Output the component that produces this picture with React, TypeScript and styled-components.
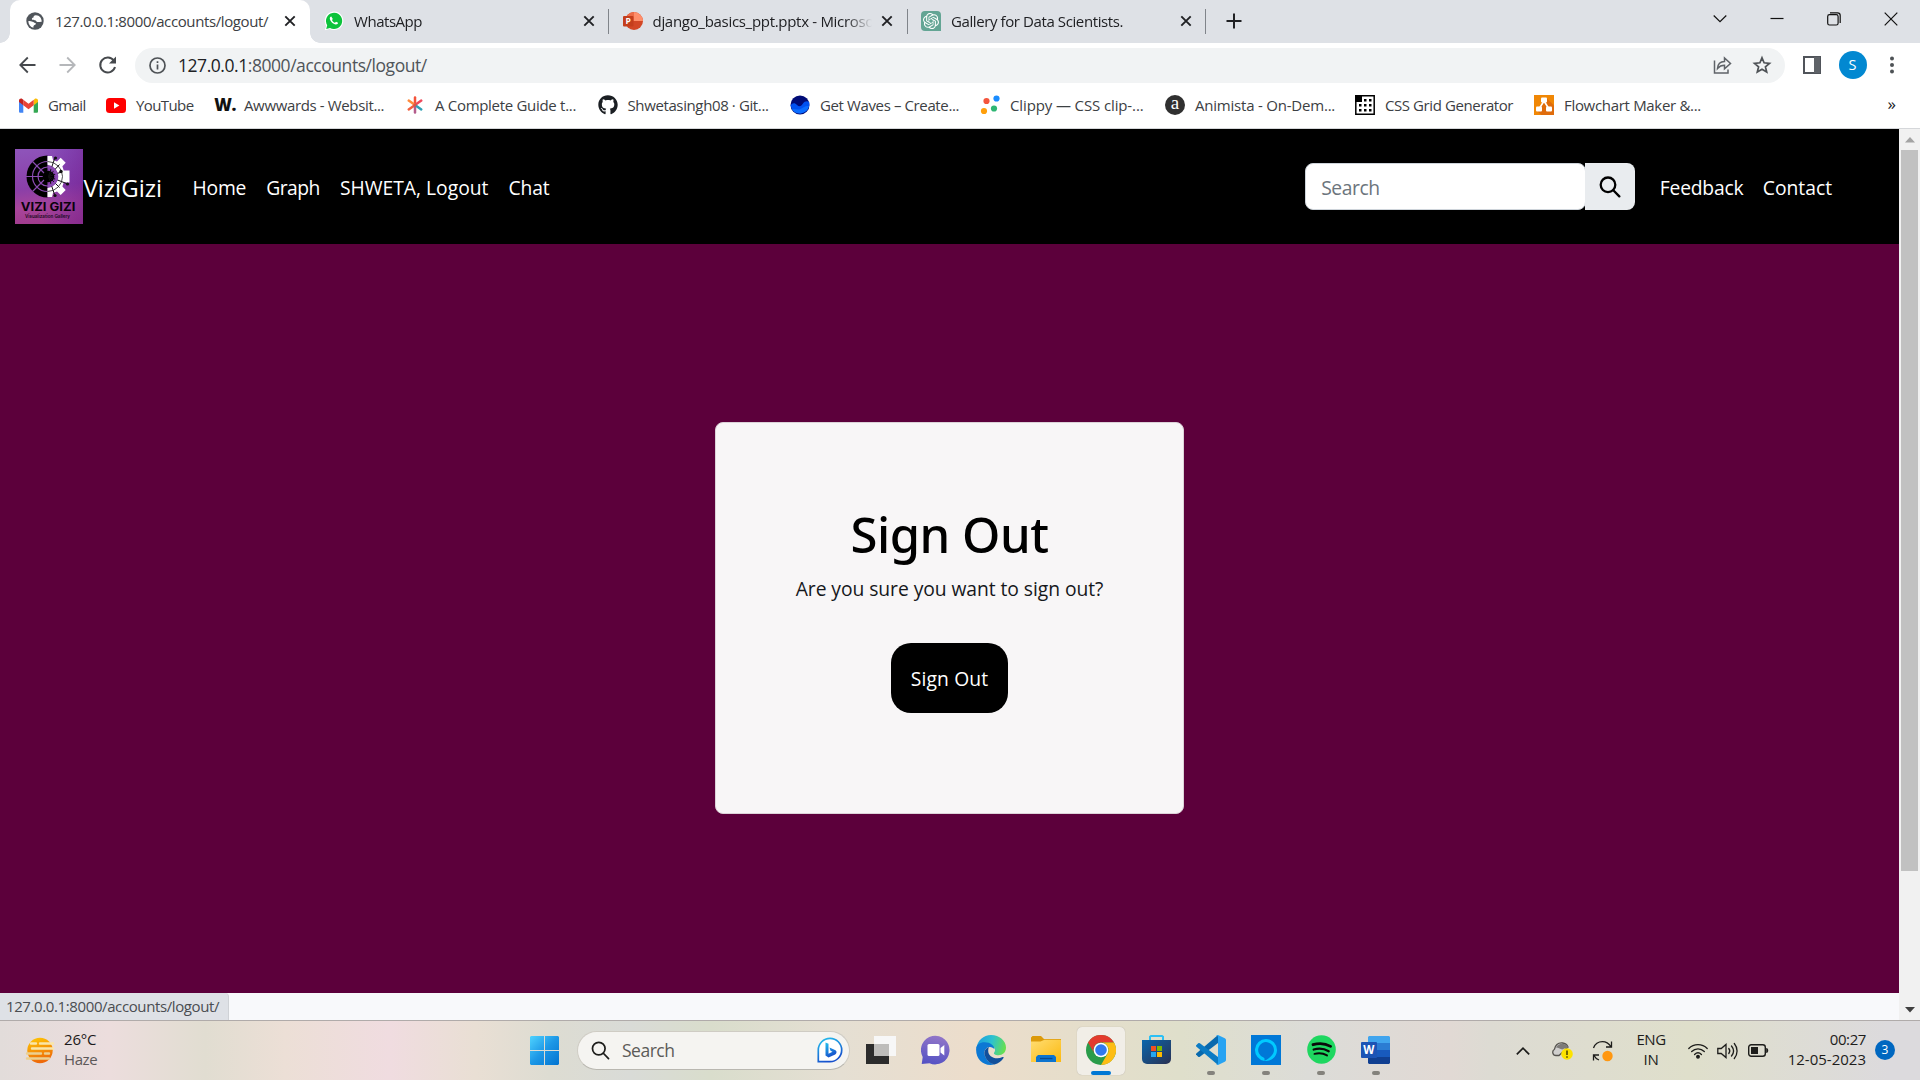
import React from "react";
import styled, { createGlobalStyle } from "styled-components";
import { FaGithub } from "react-icons/fa";
import { SiOpenai } from "react-icons/si";

const sans = `"Open Sans", "Noto Sans", sans-serif`;

const GlobalStyle = createGlobalStyle`
  *, *::before, *::after { box-sizing: border-box; }
  body { margin: 0; overflow: hidden; background: #fff; font-family: ${sans}; }
  svg { display: block; flex: none; }
  button { font-family: inherit; border: 0; padding: 0; background: none; }
`;

const Screen = styled.div`
  width: 1920px;
  height: 1080px;
  display: flex;
  flex-direction: column;
  overflow: hidden;
`;

const Label = styled.span<{ $size?: number; $track?: number; $color?: string }>`
  font-size: ${(p) => p.$size ?? 15}px;
  letter-spacing: ${(p) => p.$track ?? -0.37}px;
  color: ${(p) => p.$color ?? "#3c4043"};
  line-height: 20px;
  white-space: nowrap;
`;

/* ---------- Tab strip ---------- */

const TabStrip = styled.div`
  height: 43px;
  flex: none;
  display: flex;
  padding-left: 10px;
  background: #dee1e6;
`;

const Tab = styled.div<{ $active?: boolean }>`
  position: relative;
  width: ${(p) => (p.$active ? 300 : 298.5)}px;
  display: flex;
  align-items: center;
  padding: 0 14px 1px ${(p) => (p.$active ? 16 : 15)}px;
  background: ${(p) => (p.$active ? "#fff" : "transparent")};
  border-radius: 10px 10px 0 0;

  &::before,
  &::after {
    content: ${(p) => (p.$active ? '""' : "none")};
    position: absolute;
    bottom: 0;
    width: 10px;
    height: 10px;
  }
  &::before {
    left: -10px;
    background: radial-gradient(circle at 0 0, transparent 9.5px, #fff 10px);
  }
  &::after {
    right: -10px;
    background: radial-gradient(circle at 100% 0, transparent 9.5px, #fff 10px);
  }
`;

const TabIcon = styled.span`
  width: 18px;
  display: flex;
  justify-content: center;
`;

const TabTitle = styled(Label)<{ $fade?: boolean }>`
  flex: 1;
  min-width: 0;
  margin: 0 ${(p) => (p.$fade ? 9 : 4)}px 0 ${(p) => (p.$fade ? 11 : 11)}px;
  padding-bottom: 1px;
  overflow: hidden;
  ${(p) => p.$fade && "mask-image: linear-gradient(90deg, #000 88%, transparent 100%);"}
`;

const TabDivider = styled.div`
  width: 1px;
  height: 25px;
  margin: 9px -0.5px 0 -0.5px;
  background: #80848a;
`;

const NewTab = styled.span`
  display: flex;
  align-items: center;
  margin-left: 20px;
  padding-bottom: 1px;
`;

const WindowControls = styled.div`
  display: flex;
  align-items: flex-start;
  gap: 43px;
  margin-left: auto;
  padding: 12px 22px 0 0;
`;

/* ---------- Toolbar ---------- */

const Toolbar = styled.div`
  height: 44px;
  flex: none;
  display: flex;
  align-items: center;
  padding: 0 20px 0 18px;
  background: #fff;
`;

const NavButtons = styled.div`
  width: 117px;
  display: flex;
  gap: 20px;
`;

const Omnibox = styled.div`
  width: 1650px;
  height: 35px;
  display: flex;
  align-items: center;
  padding: 0 13px 0 14px;
  border-radius: 18px;
  background: #f1f3f4;
`;

const Url = styled(Label)`
  margin-left: 12px;
  b {
    font-weight: 400;
    color: #202124;
  }
`;

const OmniActions = styled.div`
  display: flex;
  gap: 20px;
  margin-left: auto;
`;

const ToolbarEnd = styled.div`
  flex: 1;
  display: flex;
  align-items: center;
  justify-content: space-between;
  padding-left: 18px;
`;

const Avatar = styled.span`
  width: 28px;
  height: 28px;
  border-radius: 50%;
  background: #0288d1;
  color: #fff;
  font-size: 14.5px;
  line-height: 28px;
  text-align: center;
`;

/* ---------- Bookmarks ---------- */

const BookmarkBar = styled.div`
  height: 42px;
  flex: none;
  display: flex;
  align-items: center;
  padding: 0 24px 5px 18px;
  background: #fff;
  border-bottom: 1px solid #d5d7da;
`;

const Bookmark = styled.div<{ $width: number }>`
  width: ${(p) => p.$width}px;
  display: flex;
  align-items: center;
  gap: 10px;
`;

const BookmarkIcon = styled.span`
  width: 20px;
  height: 20px;
  display: flex;
  align-items: center;
  justify-content: center;
`;

const WMark = styled.span`
  padding-left: 2px;
  color: #111;
  font: 800 17px/20px ${sans};
  letter-spacing: -0.5px;
`;

const AnimistaMark = styled.span`
  width: 20px;
  height: 20px;
  border-radius: 50%;
  background: #303030;
  color: #fff;
  font: 19px/16px "Liberation Serif", serif;
  text-align: center;
`;

const Overflow = styled(Label)`
  margin-left: auto;
  padding-bottom: 2px;
`;

/* ---------- Web page ---------- */

const Viewport = styled.div`
  height: 891px;
  flex: none;
  display: flex;
`;

const Page = styled.div`
  width: 1899px;
  display: flex;
  flex-direction: column;
  background: #f8f9fb;
`;

const Navbar = styled.nav`
  height: 115px;
  display: flex;
  align-items: center;
  padding: 0 67px 0 15px;
  background: #000;
`;

const NavLink = styled(Label)<{ $gap?: number }>`
  margin: 2px 0 0 ${(p) => p.$gap ?? 20}px;
`;

const SearchGroup = styled.div`
  display: flex;
  height: 47px;
  margin-left: auto;
`;

const SearchBox = styled.div`
  width: 281px;
  padding: 14px 0 0 15px;
  background: #fff;
  border: 1px solid #ced4da;
  border-radius: 8px;
  line-height: 0;
`;

const SearchButton = styled.button`
  width: 50px;
  margin-left: -1px;
  display: flex;
  align-items: center;
  justify-content: center;
  background: #e9ecef;
  border-radius: 0 8px 8px 0;
`;

const Main = styled.main`
  height: 749px;
  display: flex;
  justify-content: center;
  align-items: flex-start;
  padding-top: 178px;
  background: #5c003b;
`;

const Card = styled.section`
  width: 469px;
  height: 392px;
  display: flex;
  flex-direction: column;
  align-items: center;
  padding-top: 81px;
  background: #f8f6f7;
  border: 1px solid #dcd2d8;
  border-radius: 8px;
`;

const CardTitle = styled.h1`
  margin: 0;
  font: 500 49px/60px "Noto Sans", sans-serif;
  letter-spacing: -0.5px;
  color: #000;
`;

const CardText = styled(Label)`
  margin-top: 15px;
`;

const CardButton = styled.button`
  width: 117px;
  height: 70px;
  margin-top: 44px;
  padding-top: 2px;
  border-radius: 20px;
  background: #000;
`;

const PageFooter = styled.div`
  flex: 1;
  display: flex;
`;

const StatusBubble = styled.div`
  width: 229px;
  height: 27px;
  padding: 3px 0 0 6px;
  line-height: 0;
  background: #dee1e6;
  border-right: 1px solid #cfd2d6;
  border-top-right-radius: 4px;
`;

const Scrollbar = styled.div`
  width: 21px;
  display: flex;
  flex-direction: column;
  align-items: center;
  background: #f1f1f1;
`;

const ScrollButton = styled.span`
  height: 21px;
  display: flex;
  align-items: center;
`;

const ScrollThumb = styled.div`
  width: 17px;
  height: 721px;
  margin-bottom: auto;
  background: #c1c1c1;
`;

/* ---------- Taskbar ---------- */

const Taskbar = styled.div`
  height: 60px;
  flex: none;
  display: flex;
  align-items: center;
  border-top: 1px solid #b0abaa;
  background: linear-gradient(
    90deg, #e2dcda 0, #ecdddd 110px, #e1ddd1 205px, #ecdfd6 285px, #f0dce0 390px,
    #e9dfd4 475px, #dddcd2 550px, #d9dbd7 630px, #d9ddcc 710px, #e5dfd3 840px,
    #ecddcb 975px, #dfdfcb 1180px, #dcdcd8 1310px, #e1d9d4 1450px, #dddbd3 1490px,
    #dfdfcb 1690px, #dcdadd 1890px
  );
`;

const Weather = styled.div`
  width: 530px;
  display: flex;
  align-items: center;
  gap: 9px;
  padding-left: 25px;
`;

const Stack = styled.div<{ $align?: string }>`
  display: flex;
  flex-direction: column;
  align-items: ${(p) => p.$align ?? "flex-start"};
  padding-bottom: 3px;
`;

const TaskSearch = styled.div`
  width: 273px;
  height: 39px;
  display: flex;
  align-items: center;
  gap: 12px;
  margin-left: 18px;
  padding: 0 6px 1px 13px;
  border: 1px solid #cfccc4;
  border-bottom-color: #b9b7b0;
  border-radius: 20px;
  background: #f5f4f1;
  & > svg:last-child { margin-left: auto; }
`;

const AppTile = styled.div<{ $active: boolean }>`
  width: 48px;
  height: 48px;
  margin-left: 7px;
  display: flex;
  flex-direction: column;
  align-items: center;
  justify-content: space-between;
  padding-top: 8px;
  border-radius: 5px;
  background: ${(p) => (p.$active ? "#f1eee7" : "transparent")};
  box-shadow: ${(p) => (p.$active ? "0 0 1px #a8a49a" : "none")};
`;

const AppIcon = styled.span`
  height: 30px;
  display: flex;
  align-items: center;
`;

const Indicator = styled.span<{ $kind?: "active" | "open" }>`
  width: ${(p) => (p.$kind === "active" ? 20 : 8)}px;
  height: 4px;
  border-radius: 2px;
  background: ${(p) => (p.$kind === "active" ? "#0078d4" : p.$kind ? "#84827c" : "transparent")};
`;

const Tray = styled.div`
  flex: 1;
  display: flex;
  align-items: center;
  justify-content: flex-end;
  padding-right: 25px;
`;

const TrayIcon = styled.span<{ $gap: number }>`
  margin-right: ${(p) => p.$gap}px;
`;

const Badge = styled.span`
  width: 20px;
  height: 20px;
  margin: -1px 0 0 9px;
  border-radius: 50%;
  background: #0067c0;
  color: #fff;
  font-size: 12px;
  line-height: 20px;
  text-align: center;
`;

/* ---------- Icons ---------- */

const Close = () => (
  <svg width="12" height="12" viewBox="0 0 12 12" stroke="#202124" strokeWidth="1.9">
    <path d="M1.3 1.3l9.4 9.4M10.7 1.3l-9.4 9.4" />
  </svg>
);

const Globe = () => (
  <svg width="18" height="18" viewBox="0 0 18 18">
    <circle cx="9" cy="9" r="8.7" fill="#50555b" />
    <path d="M9.6 3.2c-1.400.2-2.300 1.200-2.100 2.300-1.300.3-1.900 1.200-1.500 1.900 1.200.9 2.700.4 3.700 1 .9.7.5 1.300 1.700 1.500 1.500.2 2.700-.3 4.300-.2.100-3.200-2.100-6.700-6.100-6.500zM2.300 9.200c1.500-.4 3 .2 4.200.5 1.600.4 1.500 1.100 2.600 1.400 1.200.3.9 1.300.1 1.700-1 .4-1.700.7-1.800 1.900v1C4.500 15 2.400 12.500 2.300 9.200z" fill="#fff" />
  </svg>
);

const WhatsAppMark = () => (
  <svg width="20" height="20" viewBox="0 0 20 20">
    <path d="M.8 19.300l1.300-4.600A9.300 9.300 0 1 1 5.600 18z" fill="#fff" />
    <path d="M2.200 17.900l1-3.700A8.100 8.100 0 1 1 6 16.900z" fill="#0cc33b" />
    <path d="M7.300 5.500c-.5-.1-1.600.7-1.500 2 .2 2.600 3.500 5.800 6 6 1.300.1 2.300-.8 2.200-1.700l-2-1.100-1 1.100c-1.300-.5-2.500-1.600-3-2.900l.8-.9z" fill="#fff" />
  </svg>
);

const PowerPoint = () => (
  <svg width="20" height="20" viewBox="0 0 20 20">
    <circle cx="11" cy="10" r="9" fill="#d24726" />
    <path d="M11 1a9 9 0 0 1 9 9h-9z" fill="#ff8f6b" />
    <path d="M2 10a9 9 0 0 1 9-9v9z" fill="#ed6c47" />
    <rect x="0" y="5" width="10.500" height="10.500" rx="1" fill="#c43e1c" />
    <text x="2.600" y="13.400" fontSize="8.500" fontWeight="700" fill="#fff">P</text>
  </svg>
);

const GptTile = styled.span`
  width: 20px;
  height: 20px;
  flex: none;
  display: flex;
  align-items: center;
  justify-content: center;
  border-radius: 4px 4px 0 4px;
  background: #63a594;
  color: #fff;
`;

const Gmail = () => (
  <svg width="19" height="15" viewBox="0 0 19 15">
    <path d="M0 2v11.500c0 .8.600 1.300 1.300 1.300h3V6.500z" fill="#4285f4" />
    <path d="M19 2v11.500c0 .8-.6 1.300-1.300 1.300h-3V6.500z" fill="#34a853" />
    <path d="M14.700 2l.9-1c1.500-1 3.400 0 3.400 1.500v1.400l-4.300 3.300z" fill="#fbbc04" />
    <path d="M4.300 7.200V1.700l5.200 4 5.200-4v5.500l-5.200 4z" fill="#ea4335" />
    <path d="M0 2.500C0 .900 1.900 0 3.300 1l1 .7v5.500L0 3.900z" fill="#c5221f" />
  </svg>
);

const YouTube = () => (
  <svg width="20" height="15" viewBox="0 0 20 15">
    <rect width="20" height="15" rx="3.500" fill="#f00" />
    <path d="M8 4.300v6.400l5.400-3.200z" fill="#fff" />
  </svg>
);

const Asterisk = () => (
  <svg width="18" height="18" viewBox="0 0 18 18" strokeWidth="2.500" strokeLinecap="round">
    <path d="M9 9V1.500" stroke="#f4543a" />
    <path d="M9 9l6.300-4.400" stroke="#ee4a5b" />
    <path d="M9 9L2.700 4.600" stroke="#ff8a3c" />
    <path d="M9 9l-6.300 4.400" stroke="#f2603f" />
    <path d="M9 9v7.500" stroke="#b45c8c" />
    <path d="M9 9l6.300 4.400" stroke="#2e9fb4" />
    <circle cx="9" cy="9" r="1.500" fill="#e9503e" />
  </svg>
);

const Waves = () => (
  <svg width="20" height="20" viewBox="0 0 20 20">
    <circle cx="10" cy="10" r="9.500" fill="#000b76" />
    <path d="M.5 10.500c2-3 4.500-2.700 6.500-.6 2.500 2.400 4.500 1 6-1.500 1.500-2.300 4-2.600 6.200-1.500A9.500 9.500 0 1 1 .5 10.500z" fill="#0050f0" />
    <path d="M2 14.500c2.500-1.500 5 .9 8-.3 3-1.200 5-3.700 9-3.200A9.500 9.500 0 0 1 2 14.500z" fill="#0a6cff" />
  </svg>
);

const Clippy = () => (
  <svg width="20" height="20" viewBox="0 0 20 20">
    <circle cx="6.500" cy="6" r="3.100" fill="#f4553d" />
    <circle cx="16.500" cy="3.500" r="3.100" fill="#1a8cff" />
    <circle cx="14" cy="13.500" r="3.100" fill="#2eb673" />
    <circle cx="4" cy="16" r="3.100" fill="#ff9f0a" />
  </svg>
);

const GridMark = () => (
  <svg width="20" height="20" viewBox="0 0 20 20">
    <path d="M.8.8h18.400v18.400H.8z" fill="#fff" stroke="#000" strokeWidth="1.500" />
    <path d="M0 0h7v7H0z" />
    <path d="M9 4h2.500v2.500H9zM14 4h2.500v2.500H14zM4 9h2.500v2.500H4zM9 9h2.500v2.500H9zM14 9h2.500v2.500H14zM4 14h2.500v2.500H4zM9 14h2.500v2.500H9zM14 14h2.500v2.500H14z" />
  </svg>
);

const Flowchart = () => (
  <svg width="20" height="20" viewBox="0 0 20 20">
    <rect width="20" height="20" fill="#f08705" />
    <path d="M13 3.500l7 7V20H7.500L3 16z" fill="#df6c0c" />
    <path d="M10 6l-5 8M10 6l5 8" stroke="#fff" strokeWidth="1.600" />
    <rect x="7" y="2.500" width="6" height="5" rx="1" fill="#fff" />
    <rect x="2" y="11.500" width="6" height="5" rx="1" fill="#fff" />
    <rect x="12" y="11.500" width="6" height="5" rx="1" fill="#fff" />
  </svg>
);

const ViziLogo = () => (
  <svg width="68" height="75" viewBox="0 0 68 75">
    <defs>
      <linearGradient id="vz" x1="0.400" y1="0" x2="0.500" y2="1">
        <stop offset="0" stopColor="#8e53b9" />
        <stop offset=".5" stopColor="#8a3fa8" />
        <stop offset=".75" stopColor="#a8459b" />
        <stop offset="1" stopColor="#a03a8c" />
      </linearGradient>
      <linearGradient id="vzs" x1="0" y1="0" x2="1" y2="0">
        <stop offset=".4" stopColor="#5a1fb0" stopOpacity="0" />
        <stop offset="1" stopColor="#6a1a90" stopOpacity=".45" />
      </linearGradient>
    </defs>
    <rect width="68" height="75" fill="url(#vz)" />
    <rect width="68" height="75" fill="url(#vzs)" />
    <path d="M32.500 6.500a21 21 0 0 0 0 42z" />
    <path d="M32.500 12.500a15 15 0 0 0 0 30M32.500 18a9.500 9.500 0 0 0 0 19M11 27.500h20M17.500 12.500l13 13M17.500 42.500l13-13" fill="none" stroke="#8b4cb2" strokeWidth="1.200" />
    <path d="M32.500 7h4.500l1 4 4 1.400 3.700-3.700 5 5-3.300 3.600 1.300 4.200h5.800v12h-5.800l-1.300 4 3.300 3.600-5 5-3.700-3.500-4 1.400-1 4h-4.500v-9a11.700 11.700 0 0 0 0-23.300z" fill="#fff" />
    <circle cx="33.500" cy="27.500" r="5.800" />
    <path d="M33.500 27.500L39.500 10M33.500 27.500l11-12M33.500 27.500l13-4.500M33.500 27.500l18 7M33.500 27.500l11 11M33.500 27.500l6 18" stroke="#111" strokeWidth="1" />
    <path d="M32.500 18a9.500 9.500 0 0 1 0 19" fill="none" stroke="#8b4cb2" strokeWidth="2.500" />
    <path d="M32.500 12.500a15 15 0 0 1 0 30" fill="none" stroke="#222" strokeWidth=".8" />
    <g fill="#111"><circle cx="40.500" cy="9" r="1.600" /><circle cx="46" cy="22.500" r="1.700" /><circle cx="52.500" cy="35" r="1.600" /><circle cx="40" cy="46.500" r="1.600" /></g>
    <text x="5.800" y="61.500" fontFamily="Inter, sans-serif" fontSize="11.500" fontWeight="700" textLength="54.500" lengthAdjust="spacingAndGlyphs" fill="#0a020c">VIZI GIZI</text>
    <text x="10" y="68.500" fontFamily="Inter, sans-serif" fontSize="4.900" fontWeight="600" textLength="45" lengthAdjust="spacingAndGlyphs" fill="#1a0a1c">Visualization Gallery</text>
  </svg>
);

const Magnifier = ({ size = 22, color = "#000", stroke = 2.3 }) => (
  <svg width={size} height={size} viewBox="0 0 22 22" fill="none" stroke={color} strokeWidth={stroke} strokeLinecap="round">
    <circle cx="9" cy="8.800" r="7.300" />
    <path d="M14.300 14.200l6 6.200" />
  </svg>
);

const WeatherIcon = () => (
  <svg width="30" height="30" viewBox="0 0 30 30" strokeLinecap="round" strokeWidth="2.400">
    <defs>
      <linearGradient id="sun" x1="0" y1="0" x2=".3" y2="1">
        <stop offset="0" stopColor="#ffca05" />
        <stop offset="1" stopColor="#ee6a0a" />
      </linearGradient>
    </defs>
    <circle cx="15" cy="14.500" r="12.700" fill="url(#sun)" />
    <path d="M6 7.500h5M15 7.500h13M7 12.500h21" stroke="#fae6a8" />
    <path d="M2 17.500h14M20 17.500h4M2 22.500h22" stroke="#ecd090" />
  </svg>
);

const WindowsLogo = () => (
  <svg width="29" height="29" viewBox="0 0 29 29">
    <defs>
      <linearGradient id="win" gradientUnits="userSpaceOnUse" x1="0" y1="0" x2="29" y2="29">
        <stop offset="0" stopColor="#4fd3ff" />
        <stop offset=".5" stopColor="#1c97e6" />
        <stop offset="1" stopColor="#0273d0" />
      </linearGradient>
    </defs>
    <path d="M1 0h13v14H0V1zM15 0h13l1 1v13H15zM0 15h14v14H1l-1-1zM15 15h14v13l-1 1H15z" fill="url(#win)" />
  </svg>
);

const Bing = () => (
  <svg width="26" height="26" viewBox="0 0 26 26" fill="none">
    <defs>
      <linearGradient id="bing" x1="0" y1="0" x2=".4" y2="1">
        <stop offset="0" stopColor="#25c3ee" />
        <stop offset="1" stopColor="#1650cd" />
      </linearGradient>
    </defs>
    <path d="M1.300 24.700V13A11.700 11.700 0 1 1 13 24.700z" fill="#fff" stroke="url(#bing)" strokeWidth="1.700" />
    <path d="M8.500 5.500l3 1.300v10l4-2-2-1-1-3.200 6 2.600c1.600 1 1.300 3.200-.3 4.400L11.500 20.500l-3-2z" fill="url(#bing)" />
  </svg>
);

const TaskView = () => (
  <svg width="30" height="28" viewBox="0 0 30 28">
    <rect y="8" width="23" height="20" fill="#2c2c2c" />
    <rect x="8" y="0" width="22" height="20" fill="#f7f7f7" />
    <rect x="8" y="8" width="15" height="12" fill="#bebdbb" />
  </svg>
);

const TeamsChat = () => (
  <svg width="30" height="30" viewBox="0 0 30 30">
    <defs>
      <linearGradient id="tm" x1=".6" y1="0" x2=".4" y2="1">
        <stop offset="0" stopColor="#9276c8" />
        <stop offset="1" stopColor="#5552c4" />
      </linearGradient>
    </defs>
    <path d="M.7 29l1-7A14.300 14.300 0 1 1 8.500 28.200z" fill="url(#tm)" />
    <rect x="6.500" y="9" width="12" height="12" rx="1.500" fill="#fff" />
    <path d="M19.500 13l3.800-3v10.500l-3.800-3z" fill="#fff" />
  </svg>
);

const Edge = () => (
  <svg width="30" height="30" viewBox="0 0 30 30">
    <defs>
      <linearGradient id="e1" x1="0" y1=".3" x2="1" y2=".5">
        <stop offset="0" stopColor="#1b9ee0" />
        <stop offset=".5" stopColor="#2dc1cf" />
        <stop offset="1" stopColor="#68e04f" />
      </linearGradient>
    </defs>
    <path d="M.5 13C1.500 5.500 7.500 0 15 0c8.500 0 15 6 15 12.500 0 5-3.500 7.700-7.500 7.700-3.500 0-5.300-1.300-4.300-2.700 2-2.500.5-6-3-6z" fill="url(#e1)" />
    <path d="M.1 14.500C.1 9.500 4 7.200 8.500 7.200c6 0 10 3.600 10 7.300 0 0-1.500-2.700-4.800-2.500-4 .3-6.500 4.500-4.700 9 1.500 4.500 5.500 7.500 9.500 8.400C8.500 31.800 0 25 .1 14.500z" fill="#0c78d4" />
    <path d="M13 12c-4 1.500-5.500 5-4 9 1.600 4.500 5.500 7.800 9.500 8.400 4-1.200 7-3.400 9-6.500.4-.8-.2-1.200-.9-.8-7 3.200-14.600-.3-14.400-6.600 0-1.500.3-2.600.8-3.500z" fill="#11509c" />
  </svg>
);

const Folder = () => (
  <svg width="30" height="27" viewBox="0 0 30 27">
    <defs>
      <linearGradient id="fd" x1="0" y1="0" x2="1" y2="1">
        <stop offset="0" stopColor="#ffdd72" />
        <stop offset="1" stopColor="#fcb90f" />
      </linearGradient>
    </defs>
    <path d="M0 1.500L1.500 0h8.500l3 3h17v8H0z" fill="#dc9a0a" />
    <path d="M0 5.500h9.500l4-1.700H30V26H0z" fill="url(#fd)" />
    <path d="M5 26v-5l2-2h16l2 2v5z" fill="#0c74cf" />
    <path d="M9 22.500h12.500" stroke="#0a4a90" strokeWidth="1.300" />
  </svg>
);

const Chrome = () => (
  <svg width="30" height="30" viewBox="0 0 30 30">
    <circle cx="15" cy="15" r="15" fill="#2a9c4a" />
    <path d="M2 7.500A15 15 0 0 1 28 7.500H15a7.500 7.500 0 0 0-6.500 11.250z" fill="#e33b2e" />
    <path d="M28 7.500A15 15 0 0 1 15 30l6.500-11.250A7.500 7.500 0 0 0 15 7.500z" fill="#fdbd14" />
    <circle cx="15" cy="15" r="7.300" fill="#fff" />
    <circle cx="15" cy="15" r="5.800" fill="#3079ee" />
  </svg>
);

const Store = () => (
  <svg width="29" height="29" viewBox="0 0 29 29">
    <defs>
      <linearGradient id="st" x1="0" y1="0" x2="1" y2="1">
        <stop offset="0" stopColor="#0a66ad" />
        <stop offset="1" stopColor="#2a3152" />
      </linearGradient>
    </defs>
    <path d="M8 6V1.700L9 1h11l1 .7V6" fill="none" stroke="#2cc0f5" strokeWidth="2" />
    <path d="M0 5h29v19a5 5 0 0 1-5 5H5a5 5 0 0 1-5-5z" fill="url(#st)" />
    <path d="M9 11h5v5H9z" fill="#f25022" />
    <path d="M15 11h5v5h-5z" fill="#7fba00" />
    <path d="M9 17h5v5H9z" fill="#25a7f0" />
    <path d="M15 17h5v5h-5z" fill="#ffb900" />
  </svg>
);

const VsCode = () => (
  <svg width="30" height="30" viewBox="0 0 30 30">
    <path d="M0 19.600l2.200 2.200q.9.500 1.700-.1L22 8V0L.5 18.200q-.7.700-.5 1.400z" fill="#0869ae" />
    <path d="M0 10.400l2.200-2.200q.9-.5 1.700.1L22 22v8L.5 11.800q-.7-.7-.5-1.400z" fill="#0b7bc4" />
    <path d="M22 0l6.800 3.200Q30 3.800 30 5v20q0 1.200-1.200 1.800L22 30q-1.200.3-2-.5 2 .2 2-1.500V2q0-1.700-2-1.500.8-.8 2-.5z" fill="#27a3f2" />
  </svg>
);

const Alexa = () => (
  <svg width="30" height="30" viewBox="0 0 30 30">
    <rect width="30" height="30" fill="#0078d7" />
    <path d="M15 4a11 11 0 0 0-1.500 21.900v-2.200c0-.6-.4-1-1-1.200a7.900 7.900 0 1 1 10.200-5.500c-1.300 4.500-8 8.700-9.200 8.900A11 11 0 1 0 15 4z" fill="#00caff" />
  </svg>
);

const Spotify = () => (
  <svg width="29" height="29" viewBox="0 0 29 29" fill="none" stroke="#0a0a0a" strokeLinecap="round">
    <circle cx="14.500" cy="14.500" r="14.300" fill="#1ed760" stroke="none" />
    <path d="M6 9.700c6-1.700 12.500-1.200 17.600 1.700" strokeWidth="2.800" />
    <path d="M6.700 14.500c5-1.400 10.500-.9 15 1.700" strokeWidth="2.300" />
    <path d="M7.500 18.900c4.300-1.100 8.700-.7 12.500 1.500" strokeWidth="1.900" />
  </svg>
);

const Word = () => (
  <svg width="30" height="28" viewBox="0 0 30 28">
    <path d="M7 1l1-1h20l1 1v6H7z" fill="#41a5ee" />
    <path d="M7 7h22v7H7z" fill="#2b7cd3" />
    <path d="M7 14h22v7H7z" fill="#185abd" />
    <path d="M7 21h22v6l-1 1H8l-1-1z" fill="#103f91" />
    <rect y="6" width="16" height="16" rx="1" fill="#1c54b5" />
    <text x="2.200" y="18" fontSize="11.500" fontWeight="700" fill="#fff">W</text>
  </svg>
);

const Cloud = () => (
  <svg width="22" height="18" viewBox="0 0 22 18">
    <path d="M4 13.500C.5 13.500-.4 9 2.500 7.200 3.500 2.500 7 .7 10.500 1c3 .2 4.500 1.700 5.500 4l-9 8.500z" fill="#d0cfcd" stroke="#56544f" strokeWidth="1.300" />
    <path d="M4 5.500C6.500.5 14 .5 16.300 5.500c-2 .5-4 .5-6 2-2.500-.5-4-2-6.300-2z" fill="#7d7b78" />
    <circle cx="15" cy="12" r="5.800" fill="#fde300" />
    <path d="M15 8.500v4.500M15 14.300v1.500" stroke="#3a3400" strokeWidth="1.400" />
  </svg>
);

const Sync = () => (
  <svg width="22" height="22" viewBox="0 0 22 22" fill="none" stroke="#1d1d1b" strokeWidth="1.300">
    <path d="M1.500 8C3 4 6.500 1.700 10.500 1.700c4 0 6.500 2 8.500 5M19.500 1.500V7h-5.500M7 20c-2.500-1-4-2.500-5-4.500M1.500 20.500V15H7" />
    <circle cx="15.500" cy="16" r="5.200" fill="#ff9710" stroke="none" />
  </svg>
);

const Wifi = () => (
  <svg width="20" height="16" viewBox="0 0 20 16" fill="none" stroke="#1d1d1b" strokeWidth="1.300" strokeLinecap="round">
    <path d="M.8 5.500c5-5.300 13.400-5.300 18.400 0M3.700 8.500c3.600-3.600 9-3.600 12.600 0M6.600 11.500c2-2 4.800-2 6.800 0" />
    <circle cx="10" cy="13.800" r="1.300" fill="#1d1d1b" />
  </svg>
);

const Volume = () => (
  <svg width="21" height="18" viewBox="0 0 21 18" fill="none" stroke="#1d1d1b" strokeWidth="1.300" strokeLinecap="round">
    <path d="M.8 6.500h3.400L9 2.500v13l-4.800-4H.8z" />
    <path d="M11.800 6.500c1.200 1.500 1.200 3.500 0 5M14.500 4c2.500 3 2.500 7 0 10M17.300 1.500c3.700 4.500 3.700 10.500 0 15" />
  </svg>
);

const Battery = () => (
  <svg width="21" height="13" viewBox="0 0 21 13">
    <rect x=".7" y=".7" width="16.600" height="11.600" rx="2.500" fill="none" stroke="#1d1d1b" strokeWidth="1.400" />
    <rect x="3" y="3" width="7" height="7" fill="#1d1d1b" />
    <path d="M18.200 4c1.400 0 2 1 2 2.500s-.6 2.500-2 2.500z" fill="#1d1d1b" />
  </svg>
);

/* ---------- Data ---------- */

const bookmarks = [
  { text: "Gmail", track: -0.62, width: 88, icon: <Gmail /> },
  { text: "YouTube", track: -0.6, width: 108, icon: <YouTube /> },
  { text: "Awwwards - Websit...", track: -0.36, width: 191, icon: <WMark>W.</WMark> },
  { text: "A Complete Guide t...", track: -0.3, width: 192.5, icon: <Asterisk /> },
  { text: "Shwetasingh08 · Git...", track: -0.38, width: 192.5, icon: <FaGithub size={20} color="#1b1f23" /> },
  { text: "Get Waves – Create...", track: -0.38, width: 190, icon: <Waves /> },
  { text: "Clippy — CSS clip-...", track: -0.12, width: 185, icon: <Clippy /> },
  { text: "Animista - On-Dem...", track: -0.21, width: 190, icon: <AnimistaMark>a</AnimistaMark> },
  { text: "CSS Grid Generator", track: -0.42, width: 179, icon: <GridMark /> },
  { text: "Flowchart Maker &...", track: -0.31, width: 170, icon: <Flowchart /> },
];

const apps: { name: string; icon: React.ReactNode; state?: "active" | "open" }[] = [
  { name: "taskview", icon: <TaskView /> },
  { name: "chat", icon: <TeamsChat /> },
  { name: "edge", icon: <Edge /> },
  { name: "files", icon: <Folder /> },
  { name: "chrome", icon: <Chrome />, state: "active" },
  { name: "store", icon: <Store /> },
  { name: "vscode", icon: <VsCode />, state: "open" },
  { name: "alexa", icon: <Alexa />, state: "open" },
  { name: "spotify", icon: <Spotify />, state: "open" },
  { name: "word", icon: <Word />, state: "open" },
];

const BrowserChrome = () => (
  <>
    <TabStrip>
      <Tab $active>
        <TabIcon><Globe /></TabIcon>
        <TabTitle $track={-0.39}>127.0.0.1:8000/accounts/logout/</TabTitle>
        <Close />
      </Tab>
      <Tab>
        <TabIcon><WhatsAppMark /></TabIcon>
        <TabTitle $track={-0.46} $color="#202124" $fade>WhatsApp</TabTitle>
        <Close />
      </Tab>
      <TabDivider />
      <Tab>
        <TabIcon><PowerPoint /></TabIcon>
        <TabTitle $track={-0.3} $color="#202124" $fade>django_basics_ppt.pptx - Microsoft</TabTitle>
        <Close />
      </Tab>
      <TabDivider />
      <Tab>
        <TabIcon><GptTile><SiOpenai size={16} /></GptTile></TabIcon>
        <TabTitle $track={-0.4} $color="#202124" $fade>Gallery for Data Scientists.</TabTitle>
        <Close />
      </Tab>
      <TabDivider />
      <NewTab>
        <svg width="16" height="16" viewBox="0 0 16 16" stroke="#202124" strokeWidth="2"><path d="M8 .5v15M.5 8h15" /></svg>
      </NewTab>
      <WindowControls>
        <svg width="14" height="14" viewBox="0 0 14 14" fill="none" stroke="#111" strokeWidth="1.200"><path d="M.7 3.500L7 9.700l6.300-6.200" /></svg>
        <svg width="14" height="14" viewBox="0 0 14 14" stroke="#111" strokeWidth="1.200"><path d="M.5 6.500h13" /></svg>
        <svg width="14" height="14" viewBox="0 0 14 14" fill="none" stroke="#111" strokeWidth="1.200"><rect x=".7" y="2.600" width="10.400" height="10.400" rx="1.800" /><path d="M3 .8h7.500A2.700 2.700 0 0 1 13.200 3.500V11" /></svg>
        <svg width="14" height="14" viewBox="0 0 14 14" stroke="#111" strokeWidth="1.200"><path d="M.7.700l12.600 12.600M13.300.7L.7 13.300" /></svg>
      </WindowControls>
    </TabStrip>
    <Toolbar>
      <NavButtons>
        <svg width="20" height="20" viewBox="0 0 20 20" fill="none" stroke="#46494d" strokeWidth="1.800"><path d="M17.500 10H2.500M9.800 2.500L2.300 10l7.500 7.500" /></svg>
        <svg width="20" height="20" viewBox="0 0 20 20" fill="none" stroke="#b5b7ba" strokeWidth="1.800"><path d="M1.500 10h15M9.200 2.500l7.500 7.500-7.500 7.500" /></svg>
        <svg width="20" height="20" viewBox="0 0 20 20" fill="none" stroke="#46494d" strokeWidth="2"><path d="M15.800 5.500A7.500 7.500 0 1 0 17 12" /><path d="M18 1.500V8.500H11z" fill="#46494d" stroke="none" /></svg>
      </NavButtons>
      <Omnibox>
        <svg width="17" height="17" viewBox="0 0 17 17" fill="none" stroke="#4e5256" strokeWidth="1.700"><circle cx="8.500" cy="8.500" r="7.500" /><path d="M8.500 7.500v5M8.500 4.300v1.800" /></svg>
        <Url $size={17.5} $track={-0.45} $color="#50555a"><b>127.0.0.1</b>:8000/accounts/logout/</Url>
        <OmniActions>
          <svg width="20" height="20" viewBox="0 0 20 20" fill="none" stroke="#5f6368" strokeWidth="1.500"><path d="M2.500 5.500V18H16V14.500M5.500 13.500c.3-4.500 3-7 7-7V3l6 5.500-6 5.300v-3.500c-3 0-5 .9-7 3.200z" /></svg>
          <svg width="20" height="20" viewBox="0 0 20 20" fill="none" stroke="#4e5256" strokeWidth="1.700"><path d="M10 2.800l2.100 5 5.400.5-4.100 3.500 1.300 5.300L10 14.300l-4.700 2.800 1.300-5.300-4.100-3.500 5.400-.5z" /></svg>
        </OmniActions>
      </Omnibox>
      <ToolbarEnd>
        <svg width="18" height="18" viewBox="0 0 18 18"><rect x="1" y="1" width="16" height="16" fill="#fff" stroke="#50545a" strokeWidth="2" /><path d="M11 1h6v16h-6z" fill="#5f6368" /></svg>
        <Avatar>S</Avatar>
        <svg width="16" height="18" viewBox="0 0 16 18" fill="#4e5256"><circle cx="8" cy="2.500" r="2" /><circle cx="8" cy="9" r="2" /><circle cx="8" cy="15.500" r="2" /></svg>
      </ToolbarEnd>
    </Toolbar>
    <BookmarkBar>
      {bookmarks.map((b) => (
        <Bookmark key={b.text} $width={b.width}>
          <BookmarkIcon>{b.icon}</BookmarkIcon>
          <Label $track={b.track}>{b.text}</Label>
        </Bookmark>
      ))}
      <Overflow $size={17} $track={0} $color="#202124">»</Overflow>
    </BookmarkBar>
  </>
);

const WebPage = () => (
  <Viewport>
    <Page>
      <Navbar>
        <ViziLogo />
        <NavLink $size={24} $track={0} $color="#fff" $gap={0.5}>ViziGizi</NavLink>
        <NavLink $size={19.3} $track={-0.2} $color="#fff" $gap={30.5}>Home</NavLink>
        <NavLink $size={19.3} $track={-0.5} $color="#fff">Graph</NavLink>
        <NavLink $size={19.3} $track={0} $color="#fff">SHWETA, Logout</NavLink>
        <NavLink $size={19.3} $track={-0.15} $color="#fff">Chat</NavLink>
        <SearchGroup>
          <SearchBox><Label $size={19.3} $track={-0.45} $color="#6c757d">Search</Label></SearchBox>
          <SearchButton><Magnifier /></SearchButton>
        </SearchGroup>
        <NavLink $size={19.3} $track={-0.2} $color="#fff" $gap={24.5}>Feedback</NavLink>
        <NavLink $size={19.3} $track={0} $color="#fff" $gap={19.3}>Contact</NavLink>
      </Navbar>
      <Main>
        <Card>
          <CardTitle>Sign Out</CardTitle>
          <CardText $size={19.3} $track={-0.06} $color="#16181b">Are you sure you want to sign out?</CardText>
          <CardButton><Label $size={19.3} $track={0.15} $color="#fff">Sign Out</Label></CardButton>
        </Card>
      </Main>
      <PageFooter>
        <StatusBubble><Label $track={-0.39} $color="#4a4d51">127.0.0.1:8000/accounts/logout/</Label></StatusBubble>
      </PageFooter>
    </Page>
    <Scrollbar>
      <ScrollButton><svg width="10" height="6" viewBox="0 0 10 6"><path d="M5 0l5 5.500H0z" fill="#a3a3a3" /></svg></ScrollButton>
      <ScrollThumb />
      <ScrollButton><svg width="10" height="6" viewBox="0 0 10 6"><path d="M5 5.500L0 0h10z" fill="#404040" /></svg></ScrollButton>
    </Scrollbar>
  </Viewport>
);

const WindowsTaskbar = () => (
  <Taskbar>
    <Weather>
      <WeatherIcon />
      <Stack>
        <Label $track={-0.2} $color="#1c1a1a">26°C</Label>
        <Label $track={-0.4} $color="#5d5959">Haze</Label>
      </Stack>
    </Weather>
    <WindowsLogo />
    <TaskSearch>
      <Magnifier size={19} color="#1d1d1b" stroke={2} />
      <Label $size={17.5} $track={-0.5} $color="#5c5b58">Search</Label>
      <Bing />
    </TaskSearch>
    {apps.map((a) => (
      <AppTile key={a.name} $active={a.state === "active"}>
        <AppIcon>{a.icon}</AppIcon>
        <Indicator $kind={a.state} />
      </AppTile>
    ))}
    <Tray>
      <TrayIcon $gap={22}>
        <svg width="14" height="8" viewBox="0 0 14 8" fill="none" stroke="#1d1d1b" strokeWidth="1.700"><path d="M.8 7.300L7 1.200l6.200 6.100" /></svg>
      </TrayIcon>
      <TrayIcon $gap={18}><Cloud /></TrayIcon>
      <TrayIcon $gap={22}><Sync /></TrayIcon>
      <Stack $align="center">
        <Label $track={-0.4} $color="#1d1d1b">ENG</Label>
        <Label $track={-0.2} $color="#1d1d1b">IN</Label>
      </Stack>
      <TrayIcon $gap={22} />
      <TrayIcon $gap={9}><Wifi /></TrayIcon>
      <TrayIcon $gap={10}><Volume /></TrayIcon>
      <TrayIcon $gap={19}><Battery /></TrayIcon>
      <Stack $align="flex-end">
        <Label $track={-0.4} $color="#1d1d1b">00:27</Label>
        <Label $track={0} $color="#1d1d1b">12-05-2023</Label>
      </Stack>
      <Badge>3</Badge>
    </Tray>
  </Taskbar>
);

export default function App() {
  return (
    <Screen>
      <GlobalStyle />
      <BrowserChrome />
      <WebPage />
      <WindowsTaskbar />
    </Screen>
  );
}
